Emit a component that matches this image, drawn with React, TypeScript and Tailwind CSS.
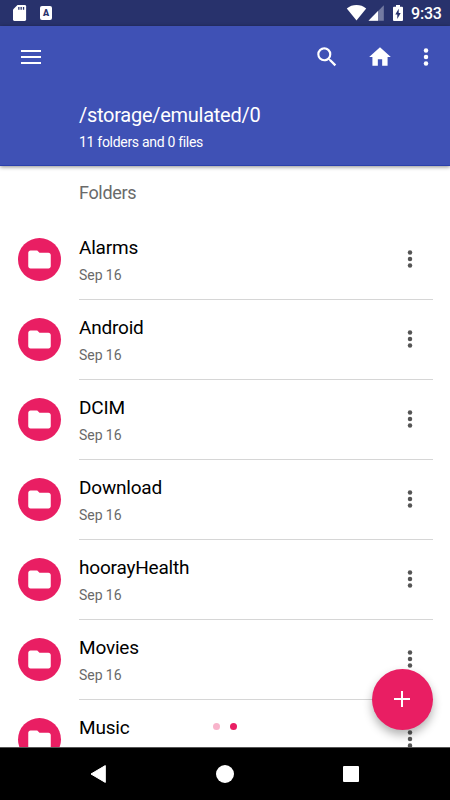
import React from "react";

const folders = [
  { name: "Alarms", date: "Sep 16" },
  { name: "Android", date: "Sep 16" },
  { name: "DCIM", date: "Sep 16" },
  { name: "Download", date: "Sep 16" },
  { name: "hoorayHealth", date: "Sep 16" },
  { name: "Movies", date: "Sep 16" },
  { name: "Music", date: "" },
];

function StatusBar() {
  return (
    <div className="flex h-[26px] shrink-0 items-center bg-[#28326c] text-white">
      <svg className="ml-3 mr-[13px] h-[18px] w-[15px]" viewBox="0 0 15 18">
        <path fill="#fff" d="M5.500 1H12.800a1.300 1.300 0 0 1 1.300 1.300v13.300a1.300 1.300 0 0 1-1.300 1.300H2.300A1.300 1.300 0 0 1 1 15.600V5.500z" />
        <path fill="#28326c" d="M6.200 3h1.300v2.800H6.200zM8.500 3h1.300v2.800H8.500zM10.900 3h1.300v2.800h-1.300z" />
      </svg>
      <div className="flex h-[14px] w-3 items-center justify-center rounded-[2px] bg-white text-[9px] leading-none font-black text-[#28326c]">
        A
      </div>
      <svg className="ml-auto mr-[1px] h-[18px] w-[21px]" viewBox="0 0 21 18">
        <path fill="#fff" d="M10.500 16.500.8 4.400C3.600 2.200 6.900 1 10.500 1s6.900 1.200 9.700 3.400z" />
      </svg>
      <svg className="mr-[8px] h-[18px] w-[16px]" viewBox="0 0 16 18">
        <path fill="#747ba2" d="M15.800 1.200v15.600H.5z" />
        <path fill="#fff" d="M10 7.100v9.700H.5z" />
      </svg>
      <svg className="mr-[7px] h-[18px] w-[12px]" viewBox="0 0 12 18">
        <path fill="#fff" d="M4 .9h4v1.800h2a1 1 0 0 1 1 1V16a1 1 0 0 1-1 1H2a1 1 0 0 1-1-1V3.700a1 1 0 0 1 1-1h2z" />
        <path fill="#28326c" d="M6.700 4.700v4.200h2L5.300 15v-4.600h-2z" />
      </svg>
      <span className="mr-[8px] w-[31px] whitespace-nowrap pt-[2px] text-[16px] leading-5 font-medium tracking-[-0.2px]">9:33</span>
    </div>
  );
}

function MoreIcon({ className }: { className: string }) {
  return (
    <svg className={className} viewBox="0 0 6 20" fill="currentColor">
      <circle cx="3" cy="3.400" r="2.250" />
      <circle cx="3" cy="10" r="2.250" />
      <circle cx="3" cy="16.600" r="2.250" />
    </svg>
  );
}

function Header() {
  return (
    <header className="z-10 flex h-[140px] shrink-0 flex-col border-b border-[#2b40ab] bg-[#3f51b5] text-white shadow-[0_1px_4px_rgba(0,0,0,0.45)]">
      <div className="flex h-[61px] items-center">
        <div className="mt-px ml-[20.5px] flex w-[20.5px] flex-col gap-1">
          <div className="h-[2px] bg-white" />
          <div className="h-[2px] bg-white" />
          <div className="h-[2px] bg-white" />
        </div>
        <svg className="ml-auto h-[26px] w-[26px]" viewBox="0 0 24 24" fill="currentColor">
          <path d="M15.500 14h-.79l-.28-.27A6.471 6.471 0 0 0 16 9.500 6.500 6.500 0 1 0 9.500 16c1.610 0 3.090-.59 4.230-1.570l.27.28v.79l5 4.990L20.490 19l-4.990-5zm-6 0C7.010 14 5 11.990 5 9.500S7.010 5 9.500 5 14 7.010 14 9.500 11.990 14 9.500 14z" />
        </svg>
        <svg className="ml-[27px] h-[26px] w-[26px]" viewBox="0 0 24 24" fill="currentColor">
          <path d="M10 20v-6h4v6h5v-8h3L12 3 2 12h3v8z" />
        </svg>
        <MoreIcon className="mr-[21px] ml-[30px] h-5 w-[6px]" />
      </div>
      <h1 className="mt-[16px] ml-[79px] text-[20px] leading-6 tracking-[-0.27px]">/storage/emulated/0</h1>
      <p className="mt-[5px] ml-[79px] text-[14px] leading-[20px] tracking-[-0.3px]">11 folders and 0 files</p>
    </header>
  );
}

function FolderRow({ name, date }: { name: string; date: string }) {
  return (
    <li className="flex h-20 shrink-0 pl-[17.5px]">
      <div className="mt-[17.500px] flex h-[43.500px] w-[43.500px] shrink-0 items-center justify-center rounded-full bg-[#e91e63] text-white">
        <svg className="h-[27px] w-[27px]" viewBox="0 0 24 24" fill="currentColor">
          <path d="M10 4H4c-1.100 0-1.990.9-1.990 2L2 18c0 1.100.9 2 2 2h16c1.100 0 2-.9 2-2V8c0-1.100-.9-2-2-2h-8z" />
        </svg>
      </div>
      <div className="mr-[17.500px] ml-[18px] flex flex-1 border-b border-[#d6d6d6]">
        <div className="flex-1">
          <p className="mt-4 text-[19px] leading-6 tracking-[-0.2px] text-black">{name}</p>
          {date && <p className="mt-[5px] text-[14px] leading-5 tracking-[-0.05px] text-[#6a6a6a]">{date}</p>}
        </div>
        <MoreIcon className="mt-[29.300px] mr-[19.100px] h-5 w-[6px] text-[#555]" />
      </div>
    </li>
  );
}

function NavBar() {
  return (
    <nav className="z-10 flex h-[53px] shrink-0 items-center border-t border-[#555] bg-black text-white">
      <svg className="ml-[90px] h-[18px] w-4" viewBox="0 0 16 18">
        <path fill="#fff" stroke="#fff" strokeLinejoin="round" d="M1 9 15.300.6v16.800z" />
      </svg>
      <div className="ml-[110px] h-[18px] w-[18px] rounded-full bg-white" />
      <div className="ml-[109.400px] h-4 w-4 rounded-[1px] bg-white" />
    </nav>
  );
}

export default function App() {
  return (
    <div className="relative flex h-[800px] w-[450px] flex-col overflow-hidden bg-white font-[Roboto,sans-serif]">
      <StatusBar />
      <Header />
      <main className="min-h-0 flex-1 overflow-hidden">
        <h2 className="mt-[15px] mb-[15px] ml-[79px] text-[18px] leading-6 tracking-[-0.33px] text-[#6a6a6a]">Folders</h2>
        <ul className="flex flex-col">
          {folders.map((folder) => (
            <FolderRow key={folder.name} {...folder} />
          ))}
        </ul>
      </main>
      <NavBar />
      <div className="absolute top-[723px] left-[213px] flex gap-[10px]">
        <div className="h-[7px] w-[7px] rounded-full bg-[#f8b4cb]" />
        <div className="h-[7px] w-[7px] rounded-full bg-[#e91e63]" />
      </div>
      <button className="absolute top-[668.700px] left-[371.700px] flex h-[61px] w-[61px] items-center justify-center rounded-full bg-[#e91e63] shadow-[0_5px_10px_rgba(0,0,0,0.3)]">
        <svg className="h-4 w-4" viewBox="0 0 16 16" fill="none" stroke="#fff" strokeWidth="2">
          <path d="M8 0v16M0 8h16" />
        </svg>
      </button>
    </div>
  );
}
